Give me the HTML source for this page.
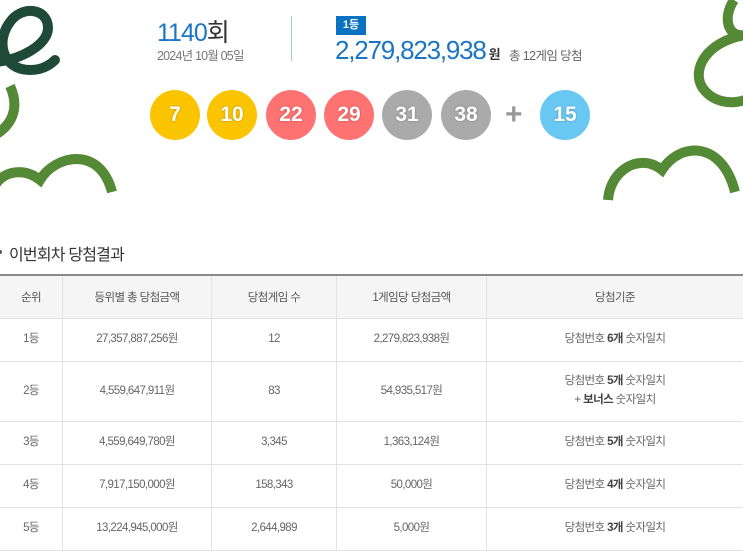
<!DOCTYPE html>
<html><head><meta charset="utf-8"><style>
*{margin:0;padding:0;box-sizing:border-box}
body{width:743px;height:543px;overflow:hidden;background:#fff;font-family:"Liberation Sans","Noto Sans CJK KR",sans-serif;position:relative;color:#333}
.a{position:absolute;white-space:nowrap}
.ball{position:absolute;top:90px;width:50px;height:50px;border-radius:50%;color:#fff;font-weight:bold;font-size:21px;text-align:center;line-height:50px;text-shadow:0 0 2px rgba(0,0,0,.3)}
table{position:absolute;left:-1px;top:274px;width:745px;border-collapse:collapse;border-top:2px solid #8a8a8a;font-family:"Liberation Sans","Noto Sans CJK KR",sans-serif;font-size:11.5px;color:#666;letter-spacing:-0.6px}
td,th{border:1px solid #e2e2e2;text-align:center;font-weight:normal}
th{background:#f5f5f5;height:43px;color:#555}
td{height:43px;line-height:19px}
b{color:#444}
</style></head><body>
<svg class="a" style="left:0;top:0" width="743" height="230">
<path d="M-5 62 C20 60 48 45 48 28 C48 8 22 5 10 22 C-5 42 3 70 30 70 C40 70 48 67 55 60" fill="none" stroke="#1f4a3a" stroke-width="10" stroke-linecap="round"/>
<path d="M10 86 C20 108 12 125 -5 135" fill="none" stroke="#548a35" stroke-width="10"/>
<path d="M-5 185 C5 170 25 168 40 180 C55 155 100 145 112 192" fill="none" stroke="#548a35" stroke-width="10"/>
<path d="M734 0 C722 18 728 38 745 35 C705 42 692 70 702 87 C712 102 730 105 745 100" fill="none" stroke="#548a35" stroke-width="10"/>
<path d="M608 200 C610 170 640 152 662 170 C680 142 722 140 735 192" fill="none" stroke="#548a35" stroke-width="10"/>
</svg>
<div class="a" style="left:157px;top:13px;font-size:25px;color:#1a75c6;letter-spacing:-1px">1140<span style="color:#333">회</span></div>
<div class="a" style="left:157px;top:45px;font-size:12.5px;color:#777;letter-spacing:-0.8px">2024년 10월 05일</div>
<div class="a" style="left:291px;top:16px;width:1px;height:45px;background:#9cc8ea"></div>
<div class="a" style="left:336px;top:16px;width:30px;height:19px;background:#0a72c0;color:#fff;font-size:11px;font-weight:bold;text-align:center;line-height:19px">1등</div>
<div class="a" style="left:335px;top:35px;font-size:26px;color:#1a75c6;letter-spacing:-1.2px">2,279,823,938<span style="font-size:13px;color:#333;font-weight:bold;margin-left:3px;letter-spacing:0">원</span></div>
<div class="a" style="left:509px;top:45px;font-size:12.5px;color:#666;letter-spacing:-0.6px">총 12게임 당첨</div>
<div class="ball" style="left:150px;background:#fbc400">7</div>
<div class="ball" style="left:207px;background:#fbc400">10</div>
<div class="ball" style="left:266px;background:#ff7272">22</div>
<div class="ball" style="left:324px;background:#ff7272">29</div>
<div class="ball" style="left:382px;background:#aaa">31</div>
<div class="ball" style="left:441px;background:#aaa">38</div>
<div class="a" style="left:505px;top:98px;font-size:30px;color:#999;font-weight:bold">+</div>
<div class="ball" style="left:540px;background:#69c8f2">15</div>
<div class="a" style="left:-2px;top:250px;width:4px;height:4px;background:#555;border-radius:50%"></div>
<div class="a" style="left:9px;top:241px;font-size:16px;color:#333;letter-spacing:-0.8px">이번회차 당첨결과</div>
<table>
<tr><th style="width:63px">순위</th><th style="width:149px">등위별 총 당첨금액</th><th style="width:125px">당첨게임 수</th><th style="width:150px">1게임당 당첨금액</th><th>당첨기준</th></tr>
<tr><td>1등</td><td>27,357,887,256원</td><td>12</td><td>2,279,823,938원</td><td>당첨번호 <b>6개</b> 숫자일치</td></tr>
<tr><td style="height:60px">2등</td><td>4,559,647,911원</td><td>83</td><td>54,935,517원</td><td>당첨번호 <b>5개</b> 숫자일치<br>+ <b>보너스</b> 숫자일치</td></tr>
<tr><td>3등</td><td>4,559,649,780원</td><td>3,345</td><td>1,363,124원</td><td>당첨번호 <b>5개</b> 숫자일치</td></tr>
<tr><td>4등</td><td>7,917,150,000원</td><td>158,343</td><td>50,000원</td><td>당첨번호 <b>4개</b> 숫자일치</td></tr>
<tr><td>5등</td><td>13,224,945,000원</td><td>2,644,989</td><td>5,000원</td><td>당첨번호 <b>3개</b> 숫자일치</td></tr>
</table>
</body></html>
